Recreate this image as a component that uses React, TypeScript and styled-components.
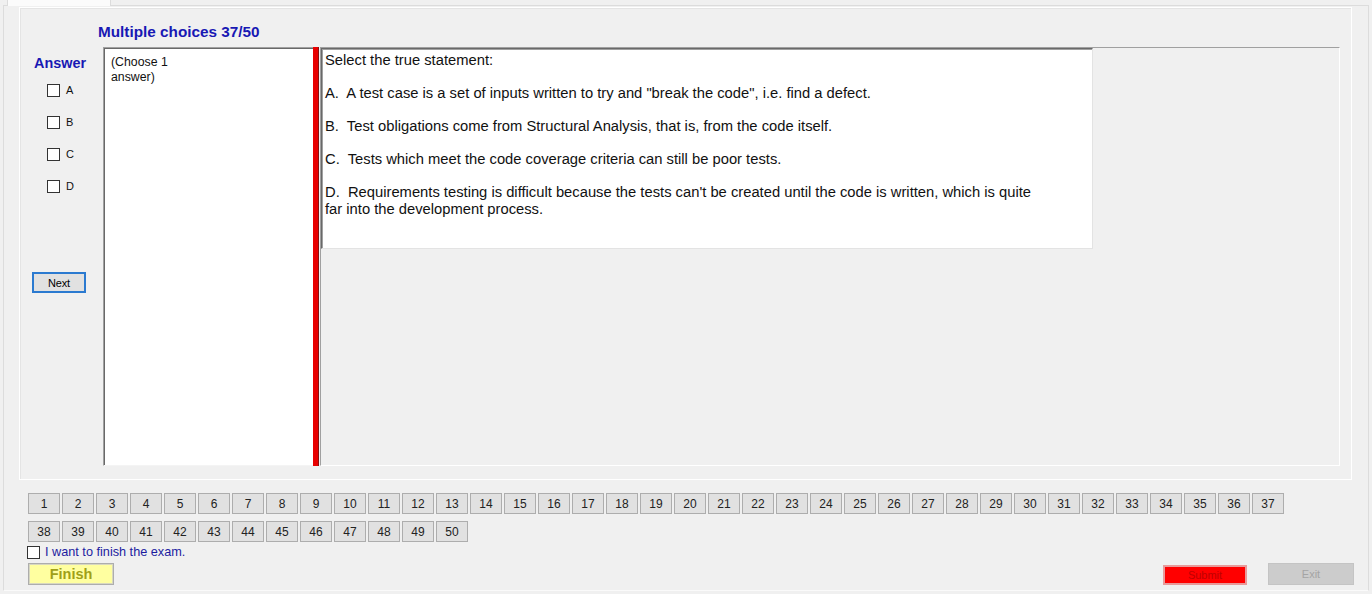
import React from "react";
import styled, { createGlobalStyle } from "styled-components";

const GlobalStyle = createGlobalStyle`
  html, body { margin: 0; padding: 0; background: #f0f0f0; }
  body { font-family: "Liberation Sans", Arial, sans-serif; color: #000; }
  * { box-sizing: border-box; }
`;

const Window = styled.div`
  width: 1372px;
  height: 594px;
  overflow: hidden;
  background: #f0f0f0;
  display: flex;
  flex-direction: column;
`;

const TabStrip = styled.div`
  height: 5px;
  padding-left: 7px;
  display: flex;
`;

const Tab = styled.div`
  width: 104px;
  height: 6px;
  background: #fbfbfb;
  border-left: 1px solid #dcdcdc;
  border-right: 1px solid #dcdcdc;
  position: relative;
  z-index: 1;
`;

const TabPage = styled.div`
  margin: 0 3px 3px 3px;
  flex: 1;
  border: 1px solid #dcdcdc;
  border-bottom-color: #fafafa;
  display: flex;
  flex-direction: column;
  padding-top: 1px;
`;

const Panel = styled.section`
  margin-left: 15px;
  width: 1333px;
  height: 473px;
  border: 1px solid #ffffff;
  box-shadow: inset 1px 1px 0 #e4e4e4;
  display: flex;
  flex-direction: column;
  padding: 15px 0 13px 0;
`;

const Title = styled.div`
  margin-left: 78px;
  margin-bottom: 6px;
  font-size: 15.3px;
  line-height: 18px;
  font-weight: bold;
  color: #1818b4;
`;

const ContentRow = styled.div`
  display: flex;
  height: 419px;
`;

const AnswerColumn = styled.div`
  width: 83px;
  padding: 8px 0 0 12px;
  display: flex;
  flex-direction: column;
  align-items: flex-start;
`;

const AnswerLabel = styled.div`
  margin-left: 2px;
  font-size: 14.4px;
  line-height: 16px;
  font-weight: bold;
  color: #1818b4;
`;

const OptionList = styled.div`
  margin: 13px 0 0 15px;
  display: flex;
  flex-direction: column;
  gap: 19px;
`;

const OptionRow = styled.label`
  display: flex;
  align-items: center;
  gap: 6px;
  height: 13px;
  font-size: 11px;
  line-height: 13px;
  color: #111;
`;

const CheckBox = styled.span`
  display: inline-block;
  width: 13px;
  height: 13px;
  border: 1px solid #333333;
  background: #ffffff;
  flex: none;
`;

const NextButton = styled.button`
  margin-top: 79px;
  width: 54px;
  height: 21px;
  padding: 0;
  border: 2px solid #2b7ad0;
  background: #e1e1e1;
  font-family: "Liberation Sans", Arial, sans-serif;
  font-size: 11px;
  color: #000;
  letter-spacing: -0.2px;
`;

const ChooseBox = styled.div`
  width: 210px;
  background: #ffffff;
  border-top: 1px solid #a0a0a0;
  border-left: 1px solid #a0a0a0;
  border-bottom: 1px solid #f4f4f4;
  box-shadow: inset 1px 1px 0 #696969;
  padding: 7px 0 0 7px;
`;

const ChooseText = styled.div`
  width: 72px;
  font-size: 12.3px;
  line-height: 15px;
  color: #111;
`;

const RedBar = styled.div`
  width: 6px;
  background: #e80000;
  border-right: 1px solid #8a1010;
`;

const RightPanel = styled.div`
  margin-left: 1px;
  width: 1020px;
  border-top: 1px solid #a0a0a0;
  border-left: 1px solid #a0a0a0;
  border-right: 1px solid #ffffff;
  border-bottom: 1px solid #ffffff;
  display: flex;
  align-items: flex-start;
`;

const QuestionBox = styled.div`
  width: 772px;
  height: 201px;
  background: #ffffff;
  border-top: 1px solid #696969;
  border-left: 1px solid #696969;
  border-right: 1px solid #e3e3e3;
  border-bottom: 1px solid #e3e3e3;
  box-shadow: inset 1px 1px 0 #a0a0a0;
  padding: 3px 0 0 3px;
  font-size: 14.75px;
  line-height: 16.5px;
  color: #111;
  white-space: pre-wrap;
`;

const Bottom = styled.div`
  margin-top: 13px;
  padding: 0 14px 0 24px;
  display: flex;
  flex-direction: column;
`;

const NumberGrid = styled.div`
  display: grid;
  grid-template-columns: repeat(37, 32px);
  grid-auto-rows: 21px;
  column-gap: 2px;
  row-gap: 7px;
`;

const NumberButton = styled.button`
  padding: 0;
  border: 1px solid #adadad;
  background: #e1e1e1;
  font-family: "Liberation Sans", Arial, sans-serif;
  font-size: 12px;
  color: #222;
`;

const FinishCheckRow = styled.label`
  margin: 4px 0 0 -1px;
  display: flex;
  align-items: center;
  gap: 5px;
  height: 13px;
  font-size: 12.7px;
  line-height: 13px;
  color: #1c1ca0;
`;

const ActionRow = styled.div`
  margin-top: 4px;
  display: flex;
  align-items: flex-end;
`;

const FinishButton = styled.button`
  width: 86px;
  height: 22px;
  padding: 0;
  border: 1px solid #adadad;
  box-shadow: inset 0 0 0 1px #d8d8c0;
  background: #ffffa0;
  font-family: "Liberation Sans", Arial, sans-serif;
  font-size: 14.5px;
  font-weight: bold;
  color: #a0a018;
`;

const SubmitButton = styled.button`
  margin-left: auto;
  width: 84px;
  height: 20px;
  padding: 0;
  border: 2px solid #e89a9a;
  background: #ff0000;
  font-family: "Liberation Sans", Arial, sans-serif;
  font-size: 11px;
  color: #c00000;
`;

const ExitButton = styled.button`
  margin-left: 21px;
  width: 86px;
  height: 22px;
  padding: 0;
  border: 1px solid #c4c4c4;
  background: #cccccc;
  font-family: "Liberation Sans", Arial, sans-serif;
  font-size: 11px;
  color: #a4a4a4;
`;

const questionText = `Select the true statement:

A.  A test case is a set of inputs written to try and "break the code", i.e. find a defect.

B.  Test obligations come from Structural Analysis, that is, from the code itself.

C.  Tests which meet the code coverage criteria can still be poor tests.

D.  Requirements testing is difficult because the tests can't be created until the code is written, which is quite
far into the development process.`;

const options = ["A", "B", "C", "D"];
const numbers = Array.from({ length: 50 }, (_, i) => i + 1);

export default function App() {
  return (
    <>
      <GlobalStyle />
      <Window>
        <TabStrip>
          <Tab />
        </TabStrip>
        <TabPage>
          <Panel>
            <Title>Multiple choices 37/50</Title>
            <ContentRow>
              <AnswerColumn>
                <AnswerLabel>Answer</AnswerLabel>
                <OptionList>
                  {options.map((o) => (
                    <OptionRow key={o}>
                      <CheckBox />
                      {o}
                    </OptionRow>
                  ))}
                </OptionList>
                <NextButton>Next</NextButton>
              </AnswerColumn>
              <ChooseBox>
                <ChooseText>(Choose 1 answer)</ChooseText>
              </ChooseBox>
              <RedBar />
              <RightPanel>
                <QuestionBox>{questionText}</QuestionBox>
              </RightPanel>
            </ContentRow>
          </Panel>
          <Bottom>
            <NumberGrid>
              {numbers.map((n) => (
                <NumberButton key={n}>{n}</NumberButton>
              ))}
            </NumberGrid>
            <FinishCheckRow>
              <CheckBox />
              I want to finish the exam.
            </FinishCheckRow>
            <ActionRow>
              <FinishButton>Finish</FinishButton>
              <SubmitButton>Submit</SubmitButton>
              <ExitButton>Exit</ExitButton>
            </ActionRow>
          </Bottom>
        </TabPage>
      </Window>
    </>
  );
}
